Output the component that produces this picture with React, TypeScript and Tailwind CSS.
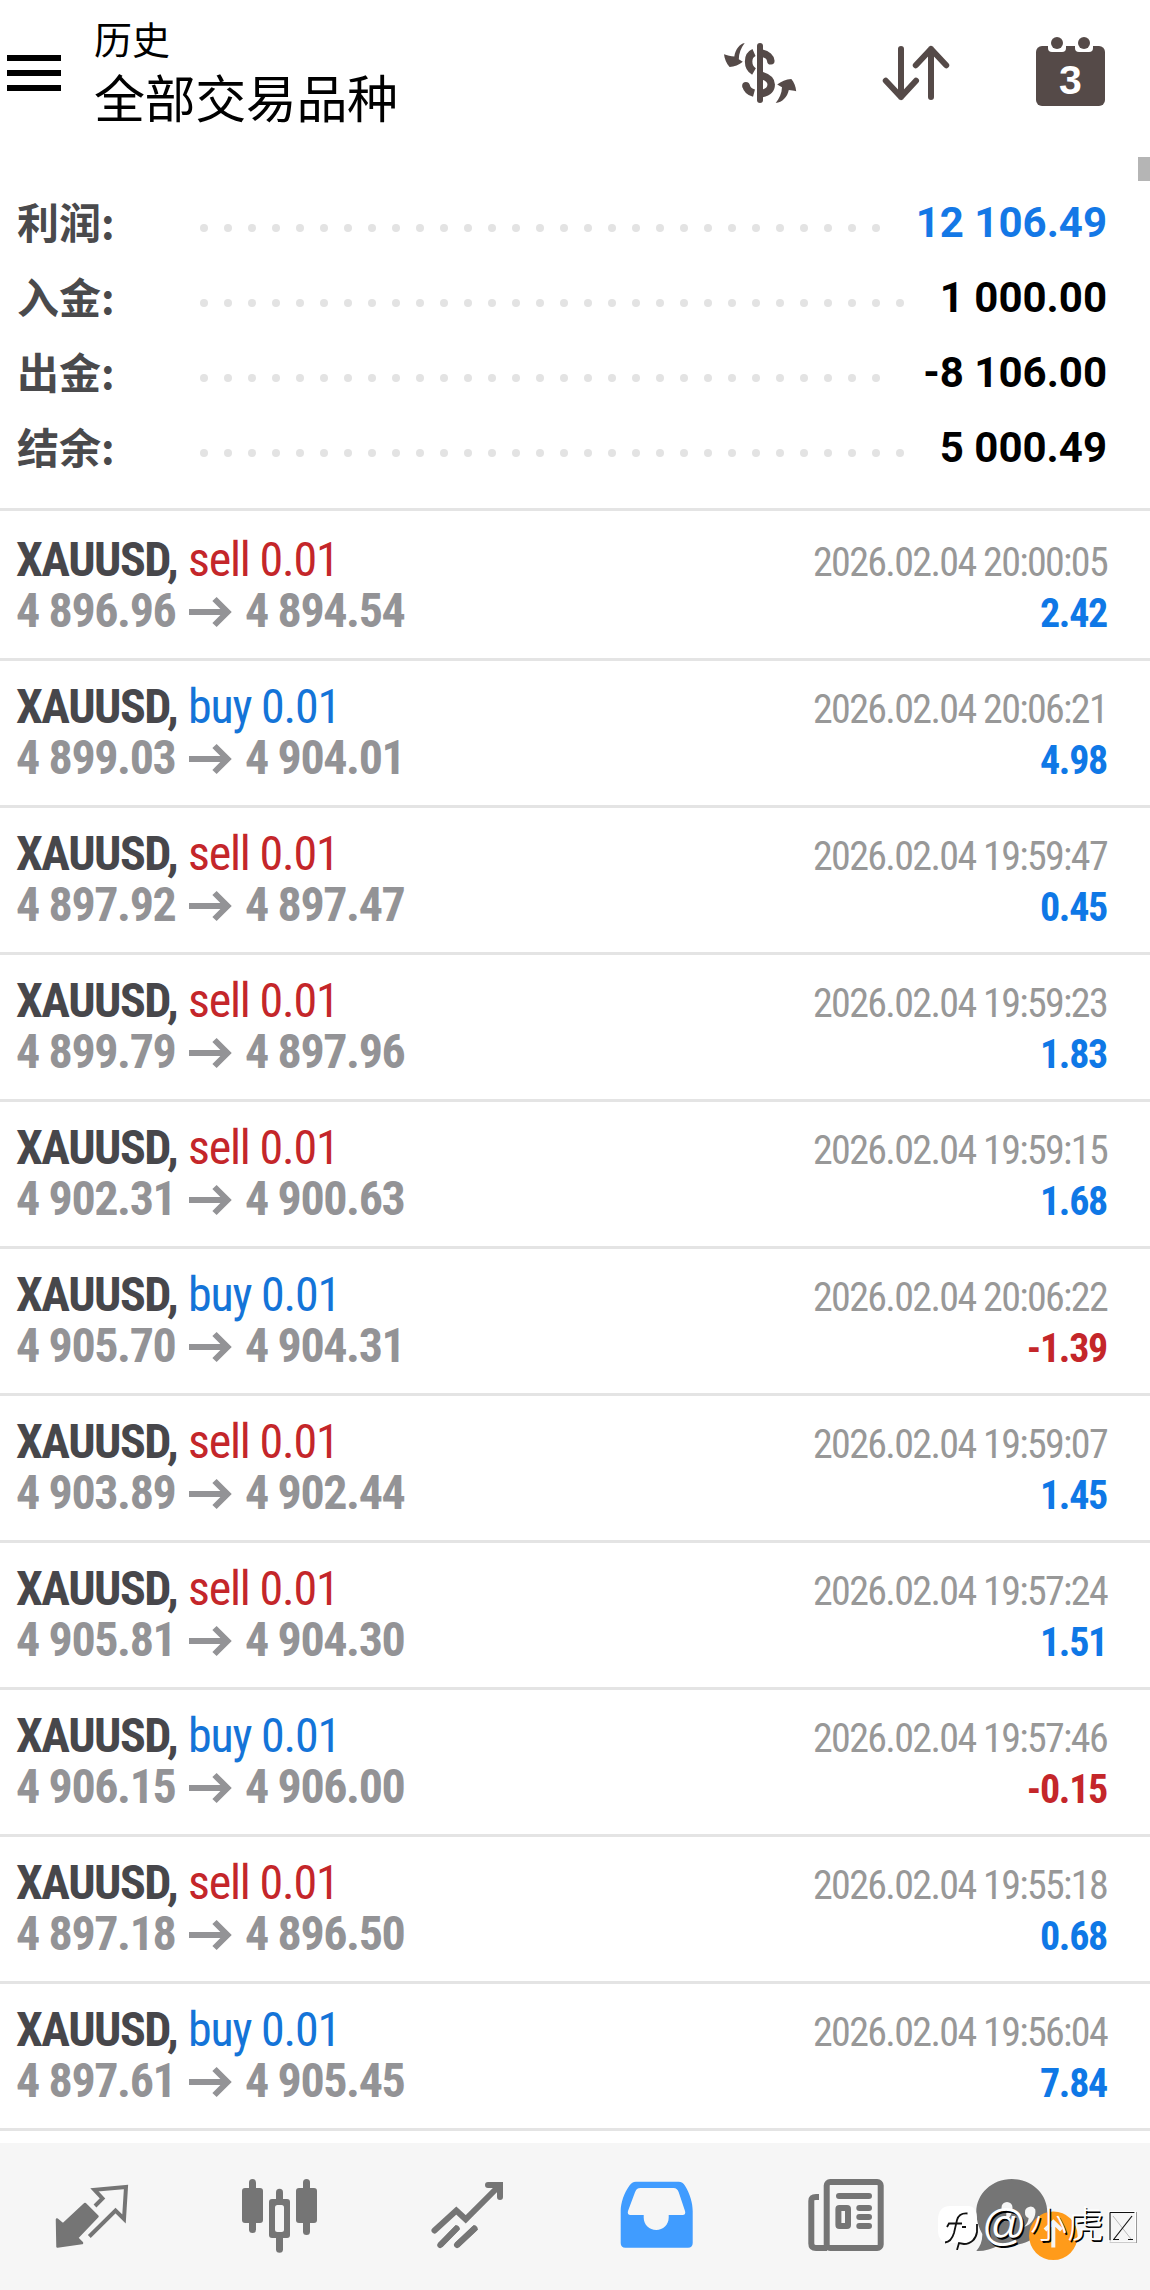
import type { ReactNode } from "react";

type Trade = {
  side: "sell" | "buy";
  open: string;
  close: string;
  time: string;
  profit: string;
};

const trades: Trade[] = [
  { side: "sell", open: "4 896.96", close: "4 894.54", time: "2026.02.04 20:00:05", profit: "2.42" },
  { side: "buy", open: "4 899.03", close: "4 904.01", time: "2026.02.04 20:06:21", profit: "4.98" },
  { side: "sell", open: "4 897.92", close: "4 897.47", time: "2026.02.04 19:59:47", profit: "0.45" },
  { side: "sell", open: "4 899.79", close: "4 897.96", time: "2026.02.04 19:59:23", profit: "1.83" },
  { side: "sell", open: "4 902.31", close: "4 900.63", time: "2026.02.04 19:59:15", profit: "1.68" },
  { side: "buy", open: "4 905.70", close: "4 904.31", time: "2026.02.04 20:06:22", profit: "-1.39" },
  { side: "sell", open: "4 903.89", close: "4 902.44", time: "2026.02.04 19:59:07", profit: "1.45" },
  { side: "sell", open: "4 905.81", close: "4 904.30", time: "2026.02.04 19:57:24", profit: "1.51" },
  { side: "buy", open: "4 906.15", close: "4 906.00", time: "2026.02.04 19:57:46", profit: "-0.15" },
  { side: "sell", open: "4 897.18", close: "4 896.50", time: "2026.02.04 19:55:18", profit: "0.68" },
  { side: "buy", open: "4 897.61", close: "4 905.45", time: "2026.02.04 19:56:04", profit: "7.84" },
];

const summary = [
  { label: "利润:", value: "12 106.49", dots: 29, color: "text-[#1478e6]" },
  { label: "入金:", value: "1 000.00", dots: 30, color: "text-black" },
  { label: "出金:", value: "-8 106.00", dots: 29, color: "text-black" },
  { label: "结余:", value: "5 000.49", dots: 30, color: "text-black" },
];

function Header() {
  return (
    <header className="flex h-[157px] items-start">
      <div className="ml-[7px] mt-[55px] flex w-[54px] flex-col gap-[9px]">
        <div className="h-[6px] bg-black" />
        <div className="h-[6px] bg-black" />
        <div className="h-[6px] bg-black" />
      </div>
      <div className="ml-[33px] pt-[18px] font-['Noto_Sans_CJK_SC',sans-serif] text-black">
        <div className="text-[38px] leading-[40px]">历史</div>
        <div className="mt-[12px] text-[51px] leading-[52px] tracking-[-0.4px]">全部交易品种</div>
      </div>
      <div className="ml-auto mr-[42px] mt-[34px] flex text-[#554a48]">
        <svg className="h-[74px] w-[80px]" viewBox="720 34 80 74" fill="currentColor">
          <g fill="none" stroke="currentColor" strokeWidth="7.5">
            <path d="M754 52.5C749.5 54.5 748.6 58.5 748.6 61.5C748.6 66 750.5 69.5 754 71.5" />
            <path d="M762 75.5C768.5 77.5 771.2 80 771.2 84.5C771.2 89.5 768 92.3 762 93.5" />
            <path d="M762 53.3C767.5 54.3 770.5 57.5 770.8 60.8" strokeLinecap="round" />
            <path d="M745.9 85.5C747 89.8 749.5 92 754 93.2" />
          </g>
          <circle cx="745.9" cy="85.6" r="3.7" />
          <path d="M760 46V100" stroke="currentColor" strokeWidth="6" strokeLinecap="round" />
          <path d="M744.7 43C739.5 44.2 735.5 49 734.3 56.5C731 56.2 727 55.2 724 54.2C724.4 58.5 726.5 63.5 729.6 67.1C734 66.8 739.5 64.8 742.8 61.8L738.8 59.3C738.8 53.5 741 48 744.7 43Z" />
          <path d="M775.7 103C779.3 98.5 781.8 93.5 782 87.3L777.2 84.6C781 81.8 786 79.3 791.3 79C794 82.2 795.8 86.5 796.2 91.3C793.5 90.6 791.5 90.2 788.8 90C787.3 97 782.5 102.3 775.7 103Z" />
        </svg>
        <svg className="ml-[78px] h-[74px] w-[76px]" viewBox="878 34 76 74" fill="none" stroke="currentColor" strokeWidth="6" strokeLinecap="round" strokeLinejoin="round">
          <path d="M901 49V97M885.8 80.8L901 97L916 80.8" />
          <path d="M931 97V49M915.8 65.2L931 49L946.2 65.2" />
        </svg>
        <svg className="ml-[78px] h-[74px] w-[76px]" viewBox="1032 34 76 74">
          <rect x="1036" y="46" width="69" height="60" rx="6" fill="currentColor" />
          <rect x="1048" y="38" width="18" height="14" rx="4" fill="#fff" />
          <rect x="1075" y="38" width="18" height="14" rx="4" fill="#fff" />
          <circle cx="1057" cy="43" r="6" fill="currentColor" />
          <circle cx="1084" cy="43" r="6" fill="currentColor" />
          <text x="1070.5" y="93.5" textAnchor="middle" fill="#fff" className="font-['Liberation_Sans',sans-serif] text-[41px] font-bold">3</text>
        </svg>
      </div>
    </header>
  );
}

function Summary() {
  return (
    <section className="h-[354px] border-b-[3px] border-[#e4e4e4] pt-[26px]">
      {summary.map((row) => (
        <div key={row.label} className="flex h-[75px] items-center pl-[17px] pr-[43px]">
          <div className="w-[183px] font-['Noto_Sans_CJK_SC',sans-serif] text-[42px] font-bold leading-[75px] text-[#4a4a4c]">
            {row.label}
          </div>
          <div className="flex gap-[16px] pt-[15px]">
            {Array.from({ length: row.dots }, (_, i) => (
              <div key={i} className="size-[8px] rounded-full bg-[#e3e3e3]" />
            ))}
          </div>
          <div className={`ml-auto whitespace-pre pt-[4px] font-[Roboto,sans-serif] text-[42px] font-bold leading-[71px] ${row.color}`}>
            {row.value}
          </div>
        </div>
      ))}
    </section>
  );
}

function TradeRow({ trade }: { trade: Trade }) {
  return (
    <div className="h-[147px] whitespace-pre border-b-[3px] border-[#e4e4e4] pl-[16px] pr-[43px] pt-[20px] font-[Roboto,sans-serif] [font-stretch:75%] first:h-[150px] first:pt-[23px]">
      <div className="flex h-[51px] items-baseline">
        <span className="w-[172px] text-[48px] font-bold leading-[51px] tracking-[-1.5px] text-[#47474b]">XAUUSD,</span>
        <span className={`text-[48px] leading-[51px] tracking-[-1.2px] ${trade.side === "sell" ? "text-[#c4262a]" : "text-[#1474d8]"}`}>
          {trade.side} 0.01
        </span>
        <span className="ml-auto text-[40px] leading-[51px] tracking-[-1.65px] text-[#989898]">{trade.time}</span>
      </div>
      <div className="flex h-[51px] items-baseline text-[#939396]">
        <span className="w-[173px] text-[48px] font-bold leading-[51px] tracking-[-1.4px]">{trade.open}</span>
        <svg className="h-[32px] w-[43px] translate-y-[1px]" viewBox="0 0 43 32" fill="none" stroke="currentColor" strokeWidth="6">
          <path d="M0 16H38M25.5 3L38.5 16L25.5 29" />
        </svg>
        <span className="ml-[13px] text-[48px] font-bold leading-[51px] tracking-[-1.4px]">{trade.close}</span>
        <span className={`ml-auto text-[40px] font-bold leading-[51px] tracking-[-1.3px] ${trade.profit.startsWith("-") ? "text-[#c4262a]" : "text-[#0f78e6]"}`}>
          {trade.profit}
        </span>
      </div>
    </div>
  );
}

function NavItem({ viewBox, className, children }: { viewBox: string; className: string; children: ReactNode }) {
  return (
    <svg className={`h-[147px] shrink-0 ${className}`} viewBox={viewBox} fill="currentColor">
      {children}
    </svg>
  );
}

function BottomNav() {
  return (
    <nav className="relative flex h-[147px] bg-[#f6f6f6] text-[#757575]">
      <NavItem viewBox="0 2143 186 147" className="w-[186px]">
        <path d="M57 2219.5L63 2224.5L85 2204L97.5 2216.5L77 2238L82 2243L57.5 2246.5Z" stroke="currentColor" strokeWidth="2.5" strokeLinejoin="round" />
        <path d="M95 2206L102.5 2198.5L94.5 2189.8L126 2187L124 2219L115.5 2210.5L89.3 2236.5" fill="none" stroke="currentColor" strokeWidth="4" />
      </NavItem>
      <NavItem viewBox="186 2143 188 147" className="w-[188px]">
        <rect x="242" y="2188" width="21" height="35" rx="3" />
        <rect x="249" y="2179" width="7" height="54" rx="3.5" />
        <rect x="296" y="2188" width="21" height="35" rx="3" />
        <rect x="303" y="2179" width="7" height="56" rx="3.5" />
        <rect x="276" y="2188.7" width="7" height="64" rx="3.5" />
        <rect x="269" y="2199" width="21" height="39" rx="3" />
        <rect x="275" y="2205" width="9" height="27" rx="2.5" fill="#f6f6f6" />
      </NavItem>
      <NavItem viewBox="374 2143 188 147" className="w-[188px]">
        <g fill="none" stroke="currentColor" strokeWidth="6" strokeLinecap="round">
          <path d="M434.5 2230.5L456.3 2210.5L465.7 2219.3L499 2186" />
          <path d="M488 2185H500V2197" />
          <path d="M440.3 2245L456.5 2228.5M457 2245L474.5 2228.5" />
          <path d="M440.3 2245L458 2227M457 2245L476 2227.3" strokeLinecap="butt" />
        </g>
      </NavItem>
      <NavItem viewBox="562 2143 188 147" className="w-[188px] text-[#409cff]">
        <path
          fillRule="evenodd"
          d="M636 2181.7H678.5C681.5 2181.7 683.5 2183 685 2185.8C690 2194 692.7 2203 692.7 2211V2243C692.7 2246 691 2247.8 688 2247.8H625.4C622.4 2247.8 620.7 2246 620.7 2243V2211C620.7 2203 624 2193 629.5 2185.5C631.3 2183 633 2181.7 636 2181.7ZM640.5 2188C637.5 2188 636 2189.5 635 2192.2L628 2211C627.3 2213.5 628.3 2215 630.5 2215H643.7V2217.5C643.7 2225 649.5 2230 656.2 2230C663 2230 668.7 2225 668.7 2217.5V2215H682.5C685 2215 685.7 2213.5 685 2211L678.8 2192.5C677.8 2189.7 676.3 2188 673.5 2188Z"
        />
      </NavItem>
      <NavItem viewBox="750 2143 188 147" className="w-[188px]">
        <g fill="none" stroke="currentColor" strokeWidth="6">
          <rect x="826.7" y="2182" width="54" height="66" rx="3.5" />
          <path d="M819 2197H816C812.5 2197 811.3 2198.5 811.3 2201V2243.5C811.3 2246.5 813 2248 816 2248H827" />
          <path d="M839 2196H869M859.3 2208H869M859.3 2217H869M859.3 2226H869" strokeLinecap="round" />
          <rect x="838.4" y="2208" width="9.6" height="18" rx="1" />
        </g>
      </NavItem>
      <NavItem viewBox="938 2143 212 147" className="w-[212px]">
        <path d="M1011.8 2179C1031.5 2179 1047.3 2193.8 1047.3 2212C1047.3 2230.2 1031.5 2245 1011.8 2245C1007 2245 1002.5 2245 998.5 2245.5C992 2249.3 984 2251.3 976.3 2251C980.3 2246.5 982.5 2241 982.3 2234C978.6 2227.5 976.3 2220 976.3 2212C976.3 2193.8 992 2179 1011.8 2179Z" />
        <g fill="#f6f6f6">
          <path d="M1001.5 2207.5a5.5 5.5 0 0 1 11 0c0 6-3 11.5-8 14c1.5-3 2-5.500 1.800-8.300a5.500 5.500 0 0 1-4.800-5.700Z" />
          <path d="M1025 2212.500a5.500 5.500 0 0 1 10.300-3c1 6.500-3 15-11.300 17.500c3-3 4.500-6 4.600-9a5.500 5.500 0 0 1-3.600-5.500Z" />
        </g>
        <circle cx="1053.3" cy="2235.7" r="24.3" fill="#ff9b1a" />
        <path d="M1053.300 2247.500V2223M1045 2230L1053.300 2222L1061.500 2230" fill="none" stroke="#f6f6f6" strokeWidth="4" />
      </NavItem>
      <Watermark />
    </nav>
  );
}

function Watermark() {
  return (
    <div className="absolute left-[938px] top-[57px] flex h-[50px] items-start text-white [text-shadow:1.5px_1.5px_0_#000]">
      <svg className="h-[50px] w-[44px]" viewBox="0 0 44 50" fill="none">
        <path d="M12 6H30C37 6 39 12 39 20V29C39 38 35 43 28 43H12C5 43 0 39 0 31V20C0 11 4 6 12 6Z" fill="#fff" />
        <path d="M29.500 13.500C24 13 20.500 15 19 20L16 33C14.500 38 12 42 7 42.500M9 27L11 23.500H24M24 27H28M39 24V32C38 39 33 44 26 44L21 43L19 50" stroke="#111" strokeWidth="1.800" />
      </svg>
      <span className="w-[48px] font-['Liberation_Sans',sans-serif] text-[44px] leading-[50px] tracking-[-1px]">@</span>
      <span className="font-['Noto_Sans_CJK_SC',sans-serif] text-[37px] font-light leading-[45px]">小虎</span>
      <svg className="ml-[4px] mt-[11px] h-[34px] w-[31px]" viewBox="0 0 31 34" fill="none">
        <rect x="2" y="1.500" width="26.500" height="30" stroke="#999" />
        <rect x="1" y="0.500" width="26.500" height="30.500" stroke="#fff" />
        <path d="M2 29V1.500H26M5 28.500H11M20 28.500H25" stroke="#111" />
        <path d="M5 5L23 28" stroke="#bbb" />
        <path d="M24 5L6 28" stroke="#111" strokeWidth="1.200" />
      </svg>
    </div>
  );
}

export default function App() {
  return (
    <div className="relative flex h-[2290px] w-[1150px] flex-col overflow-hidden bg-white">
      <Header />
      <Summary />
      <div className="h-[1632px]">
        {trades.map((trade) => (
          <TradeRow key={trade.time} trade={trade} />
        ))}
      </div>
      <BottomNav />
      <div className="absolute right-0 top-[157px] h-[24px] w-[12px] bg-[#b5b5b5]" />
    </div>
  );
}
